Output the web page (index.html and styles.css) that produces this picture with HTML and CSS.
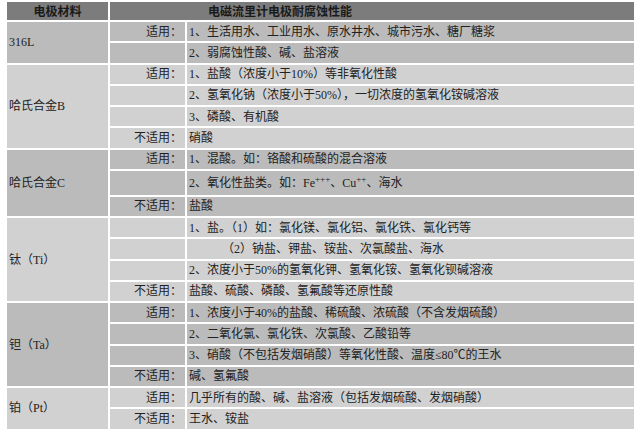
FILE: index.html
```html
<!DOCTYPE html>
<html lang="zh-CN">
<head>
<meta charset="utf-8">
<title>电磁流量计电极耐腐蚀性能</title>
<link rel="stylesheet" href="styles.css">
</head>
<body>
<table class="grid">
  <colgroup>
    <col class="c-mat">
    <col class="c-use">
    <col class="c-desc">
  </colgroup>
  <thead>
    <tr class="head">
      <th class="h-mat">电极材料</th>
      <th class="h-title" colspan="2">电磁流里计电极耐腐蚀性能</th>
    </tr>
  </thead>
  <tbody class="g-dark">
    <tr><td class="mat" rowspan="2">316L</td><td class="use">适用：</td><td class="desc">1、生活用水、工业用水、原水井水、城市污水、糖厂糖浆</td></tr>
    <tr><td class="use"></td><td class="desc">2、弱腐蚀性酸、碱、盐溶液</td></tr>
  </tbody>
  <tbody class="g-light">
    <tr><td class="mat" rowspan="4">哈氏合金B</td><td class="use">适用：</td><td class="desc">1、盐酸（浓度小于10%）等非氧化性酸</td></tr>
    <tr><td class="use"></td><td class="desc">2、氢氧化钠（浓度小于50%），一切浓度的氢氧化铵碱溶液</td></tr>
    <tr><td class="use"></td><td class="desc">3、磷酸、有机酸</td></tr>
    <tr><td class="use">不适用：</td><td class="desc">硝酸</td></tr>
  </tbody>
  <tbody class="g-dark">
    <tr><td class="mat" rowspan="3">哈氏合金C</td><td class="use">适用：</td><td class="desc">1、混酸。如：铬酸和硫酸的混合溶液</td></tr>
    <tr class="tall"><td class="use"></td><td class="desc">2、氧化性盐类。如：Fe<sup>+++</sup>、Cu<sup>++</sup>、海水</td></tr>
    <tr><td class="use">不适用：</td><td class="desc">盐酸</td></tr>
  </tbody>
  <tbody class="g-light">
    <tr><td class="mat" rowspan="4">钛（Ti）</td><td class="use"></td><td class="desc">1、盐。（1）如：氯化镁、氯化铝、氯化铁、氯化钙等</td></tr>
    <tr><td class="use"></td><td class="desc"><span class="sub">（2）钠盐、钾盐、铵盐、次氯酸盐、海水</span></td></tr>
    <tr><td class="use"></td><td class="desc">2、浓度小于50%的氢氧化钾、氢氧化铵、氢氧化钡碱溶液</td></tr>
    <tr><td class="use">不适用：</td><td class="desc">盐酸、硫酸、磷酸、氢氟酸等还原性酸</td></tr>
  </tbody>
  <tbody class="g-dark">
    <tr><td class="mat" rowspan="4">钽（Ta）</td><td class="use">适用：</td><td class="desc">1、浓度小于40%的盐酸、稀硫酸、浓硫酸（不含发烟硫酸）</td></tr>
    <tr><td class="use"></td><td class="desc">2、二氧化氯、氯化铁、次氯酸、乙酸铅等</td></tr>
    <tr><td class="use"></td><td class="desc">3、硝酸（不包括发烟硝酸）等氧化性酸、温度≤80℃的王水</td></tr>
    <tr><td class="use">不适用：</td><td class="desc">碱、氢氟酸</td></tr>
  </tbody>
  <tbody class="g-light">
    <tr><td class="mat" rowspan="2">铂（Pt）</td><td class="use">适用：</td><td class="desc">几乎所有的酸、碱、盐溶液（包括发烟硫酸、发烟硝酸）</td></tr>
    <tr><td class="use">不适用：</td><td class="desc">王水、铵盐</td></tr>
  </tbody>
</table>
</body>
</html>
```
FILE: styles.css
```css
html, body {
  margin: 0;
  padding: 0;
  background: #ffffff;
}

body {
  font-family: "Liberation Serif", "Noto Sans CJK SC", serif;
  font-size: 12px;
  color: #222222;
}

.grid {
  margin: 0 0 0 5px;
  border-collapse: separate;
  border-spacing: 2px;
  table-layout: fixed;
  width: 631px;
}

.c-mat { width: 101px; }
.c-use { width: 75px; }
.c-desc { width: 447px; }

.grid th,
.grid td {
  padding: 0 2px;
  line-height: 14px;
  height: 19.25px;
  vertical-align: middle;
  white-space: nowrap;
  overflow: hidden;
}

.grid .head th {
  height: 18px;
  background: #7c7c7c;
  color: #1a1a1a;
  font-weight: bold;
  font-family: "Noto Sans CJK SC", sans-serif;
}

.grid .head .h-mat {
  text-align: center;
}

.grid .head .h-title {
  text-align: left;
  padding-left: 98px;
}

.g-dark td {
  background: #bbbbbb;
}

.g-light td {
  background: #d1d1d1;
}

.mat {
  text-align: left;
}

.grid .use {
  text-align: right;
  padding-right: 3px;
}

.desc {
  text-align: left;
}

.grid .tall td {
  height: 24px;
}

.desc sup {
  font-size: 9px;
  line-height: 0;
  vertical-align: 5px;
}

.sub {
  padding-left: 2.75em;
}
```
